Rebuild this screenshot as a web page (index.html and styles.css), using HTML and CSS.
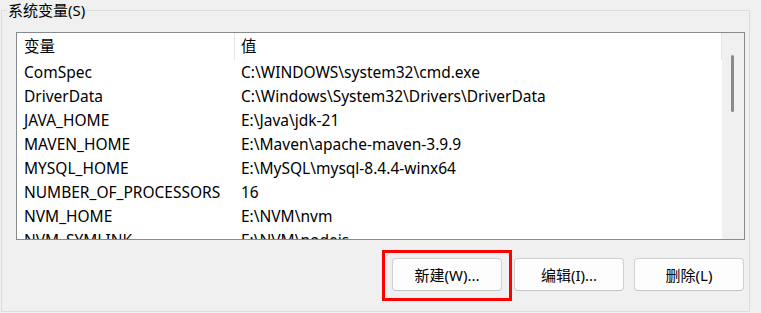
FILE: index.html
```html
<!DOCTYPE html>
<html lang="zh-CN">
<head>
    <meta charset="UTF-8">
    <title>系统变量</title>
    <link rel="stylesheet" href="styles.css">
</head>
<body>

    <!-- System variables group -->
    <fieldset class="group">
        <legend class="group-title">系统变量(S)</legend>
        <div class="group-body">

            <!-- Variable list -->
            <div class="list">
                <div class="list-main">
                    <div class="list-head">
                        <div class="col col-name">变量</div>
                        <div class="col col-value">值</div>
                    </div>
                    <div class="list-rows">
                        <div class="row"><div class="col col-name">ComSpec</div><div class="col col-value">C:\WINDOWS\system32\cmd.exe</div></div>
                        <div class="row"><div class="col col-name">DriverData</div><div class="col col-value">C:\Windows\System32\Drivers\DriverData</div></div>
                        <div class="row"><div class="col col-name">JAVA_HOME</div><div class="col col-value">E:\Java\jdk-21</div></div>
                        <div class="row"><div class="col col-name">MAVEN_HOME</div><div class="col col-value">E:\Maven\apache-maven-3.9.9</div></div>
                        <div class="row"><div class="col col-name">MYSQL_HOME</div><div class="col col-value">E:\MySQL\mysql-8.4.4-winx64</div></div>
                        <div class="row"><div class="col col-name">NUMBER_OF_PROCESSORS</div><div class="col col-value">16</div></div>
                        <div class="row"><div class="col col-name">NVM_HOME</div><div class="col col-value">E:\NVM\nvm</div></div>
                        <div class="row"><div class="col col-name">NVM_SYMLINK</div><div class="col col-value">E:\NVM\nodejs</div></div>
                    </div>
                </div>
                <div class="scrollbar"><div class="thumb"></div></div>
            </div>

            <!-- Buttons -->
            <div class="actions">
                <div class="highlight">
                    <button class="btn">新建(W)...</button>
                </div>
                <button class="btn btn-edit">编辑(I)...</button>
                <button class="btn btn-delete">删除(L)</button>
            </div>

        </div>
    </fieldset>

</body>
</html>
```

FILE: styles.css
```css
/* General body styling */
body {
    margin: 0;
    background-color: #f0f0f0;
    font-family: "Noto Sans", "Noto Sans CJK SC", sans-serif;
    font-size: 15px;
    color: #000;
}

/* Group box */
.group {
    margin: 0 0 0 1px;
    width: 749px;
    box-sizing: border-box;
    padding: 12px 4px 10px 5px;
    border: 1px solid #dcdcdc;
}
.group-title {
    padding: 0 1px;
    line-height: 20px;
}
.group-body {
    padding-left: 9px;
}

/* List view */
.list {
    display: flex;
    height: 208px;
    box-sizing: border-box;
    border: 1px solid #868a8e;
    background-color: #fff;
    font-size: 15.5px;
}
.list-main {
    flex: 1;
    display: flex;
    flex-direction: column;
    overflow: hidden;
}
.list-head {
    display: flex;
    height: 27px;
    line-height: 27px;
    flex-shrink: 0;
}
.list-head .col {
    border-right: 1px solid #e5e5e5;
}
.row {
    display: flex;
    height: 24px;
    line-height: 24px;
    flex-shrink: 0;
}
.col {
    white-space: nowrap;
    overflow: hidden;
    box-sizing: border-box;
}
.col-name {
    width: 218px;
    padding-left: 7px;
}
.col-value {
    flex: 1;
    padding-left: 6px;
}
.row .col-name {
    padding-right: 1px;
}

/* Scrollbar */
.scrollbar {
    width: 22px;
    background-color: #f0f0f0;
    padding: 22px 0 0 9px;
    box-sizing: border-box;
}
.thumb {
    width: 3px;
    height: 57px;
    border-radius: 2px;
    background-color: #8a8a8a;
}

/* Buttons */
.actions {
    display: flex;
    justify-content: flex-end;
    align-items: flex-start;
    margin-top: 10px;
    padding-right: 1px;
}
.highlight {
    border: 3px solid #ff0000;
    padding: 5px 7px 7px 7px;
}
.btn {
    display: block;
    width: 110px;
    height: 33px;
    padding: 0;
    border: 1px solid #d0d0d0;
    border-bottom-color: #c4c4c4;
    border-radius: 4px;
    background-color: #fdfdfd;
    font-family: inherit;
    font-size: 15px;
    color: #000;
}
.btn-edit {
    margin: 8px 0 0 2px;
}
.btn-delete {
    margin: 8px 0 0 10px;
}
```
